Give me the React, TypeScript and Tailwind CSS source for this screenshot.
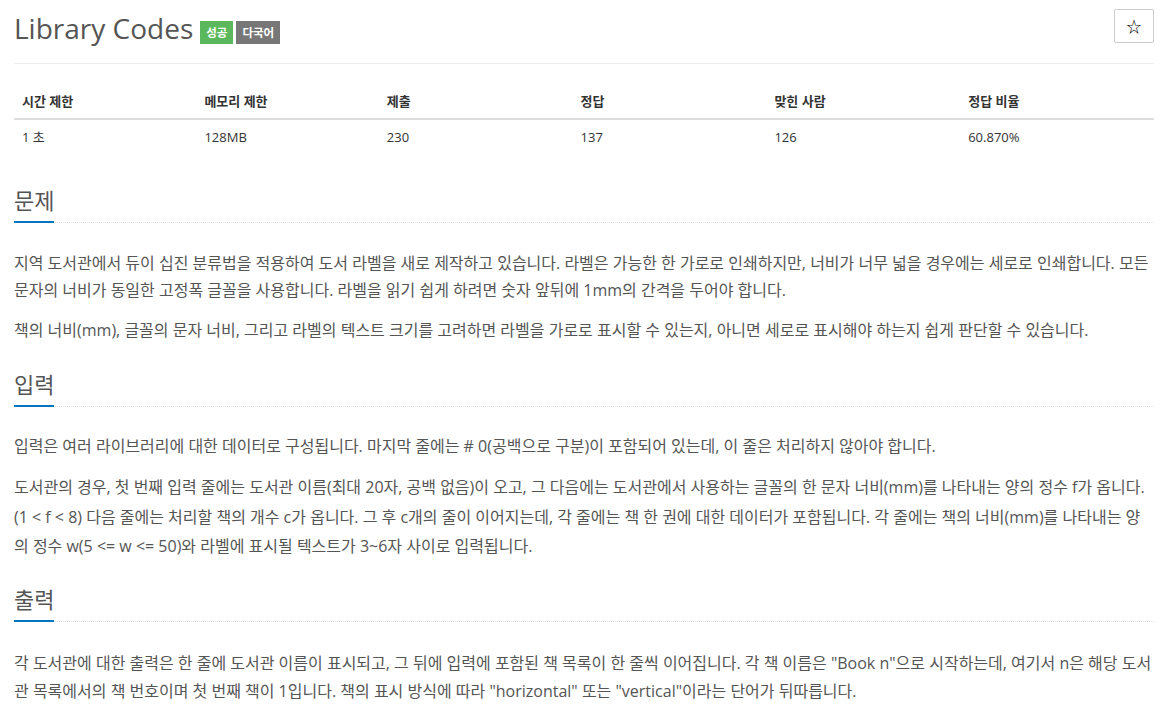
import React from 'react';

const stats = [
  { label: '시간 제한', value: '1 초', w: 'w-[16%]' },
  { label: '메모리 제한', value: '128MB', w: 'w-[16%]' },
  { label: '제출', value: '230', w: 'w-[17%]' },
  { label: '정답', value: '137', w: 'w-[17%]' },
  { label: '맞힌 사람', value: '126', w: 'w-[17%]' },
  { label: '정답 비율', value: '60.870%', w: 'w-[17%]' },
];

const Headline: React.FC<{ title: string; className?: string }> = ({ title, className }) => (
  <div className={`flex border-b border-dotted border-[#ddd] ${className ?? ''}`}>
    <span className="inline-block -mb-px pb-[6px] border-b-2 border-[#0076c0] text-[22px] leading-[30px] text-[#555]">
      {title}
    </span>
  </div>
);

const App: React.FC = () => {
  return (
    <div className="min-h-screen bg-white pl-[14px] pr-[18px] font-['Open_Sans','Noto_Sans_CJK_KR',sans-serif] text-[#555]">
      {/* Header */}
      <div className="flex items-start justify-between pt-[10px]">
        <div className="flex items-end gap-[7px]">
          <h1 className="text-[28px] leading-[36px] font-normal text-[#555]">Library Codes</h1>
          <div className="flex gap-[3px] mb-[2px]">
            <span className="h-[23px] px-[6px] flex items-center bg-[#5cb85c] text-white text-[11.5px] font-bold">성공</span>
            <span className="h-[23px] px-[6px] flex items-center bg-[#777] text-white text-[11.5px] font-bold">다국어</span>
          </div>
        </div>
        <button className="-mt-px w-[40px] h-[34px] flex items-center justify-center border border-[#ccc] rounded-[2px] bg-white text-[15px] text-black">
          ☆
        </button>
      </div>

      <div className="mt-[17px] border-t border-[#eee]" />

      {/* Stats table */}
      <table className="mt-[20px] w-full table-fixed border-collapse text-[13px] text-[#333]">
        <thead>
          <tr className="border-b-2 border-[#ddd]">
            {stats.map(s => (
              <th key={s.label} className={`${s.w} px-2 py-2 leading-[18px] text-left font-bold`}>{s.label}</th>
            ))}
          </tr>
        </thead>
        <tbody>
          <tr>
            {stats.map(s => (
              <td key={s.label} className="px-2 py-2 leading-[18px]">{s.value}</td>
            ))}
          </tr>
        </tbody>
      </table>

      {/* 문제 */}
      <section className="mt-[31px]">
        <Headline title="문제" />
        <div className="mt-[27px] text-[16px] leading-[27px]">
          <p className="mb-[13px]">
            지역 도서관에서 듀이 십진 분류법을 적용하여 도서 라벨을 새로 제작하고 있습니다. 라벨은 가능한 한 가로로 인쇄하지만, 너비가 너무 넓을 경우에는 세로로 인쇄합니다. 모든 문자의 너비가 동일한 고정폭 글꼴을 사용합니다. 라벨을 읽기 쉽게 하려면 숫자 앞뒤에 1mm의 간격을 두어야 합니다.
          </p>
          <p className="mb-[13px]">
            책의 너비(mm), 글꼴의 문자 너비, 그리고 라벨의 텍스트 크기를 고려하면 라벨을 가로로 표시할 수 있는지, 아니면 세로로 표시해야 하는지 쉽게 판단할 수 있습니다.
          </p>
        </div>
      </section>

      {/* 입력 */}
      <section className="mt-[25px]">
        <Headline title="입력" />
        <div className="mt-[26px] text-[16px] leading-[27px]">
          <p className="mb-[13px]">
            입력은 여러 라이브러리에 대한 데이터로 구성됩니다. 마지막 줄에는 # 0(공백으로 구분)이 포함되어 있는데, 이 줄은 처리하지 않아야 합니다.
          </p>
          <p className="mb-[13px] leading-[29.5px]">
            도서관의 경우, 첫 번째 입력 줄에는 도서관 이름(최대 20자, 공백 없음)이 오고, 그 다음에는 도서관에서 사용하는 글꼴의 한 문자 너비(mm)를 나타내는 양의 정수 f가 옵니다. (1 &lt; f &lt; 8) 다음 줄에는 처리할 책의 개수 c가 옵니다. 그 후 c개의 줄이 이어지는데, 각 줄에는 책 한 권에 대한 데이터가 포함됩니다. 각 줄에는 책의 너비(mm)를 나타내는 양의 정수 w(5 &lt;= w &lt;= 50)와 라벨에 표시될 텍스트가 3~6자 사이로 입력됩니다.
          </p>
        </div>
      </section>

      {/* 출력 */}
      <section className="mt-[22px]">
        <Headline title="출력" />
        <div className="mt-[27px] text-[16px] leading-[28px]">
          <p className="mb-[13px]">
            각 도서관에 대한 출력은 한 줄에 도서관 이름이 표시되고, 그 뒤에 입력에 포함된 책 목록이 한 줄씩 이어집니다. 각 책 이름은 "Book n"으로 시작하는데, 여기서 n은 해당 도서관 목록에서의 책 번호이며 첫 번째 책이 1입니다. 책의 표시 방식에 따라 "horizontal" 또는 "vertical"이라는 단어가 뒤따릅니다.
          </p>
        </div>
      </section>
    </div>
  );
};

export default App;
